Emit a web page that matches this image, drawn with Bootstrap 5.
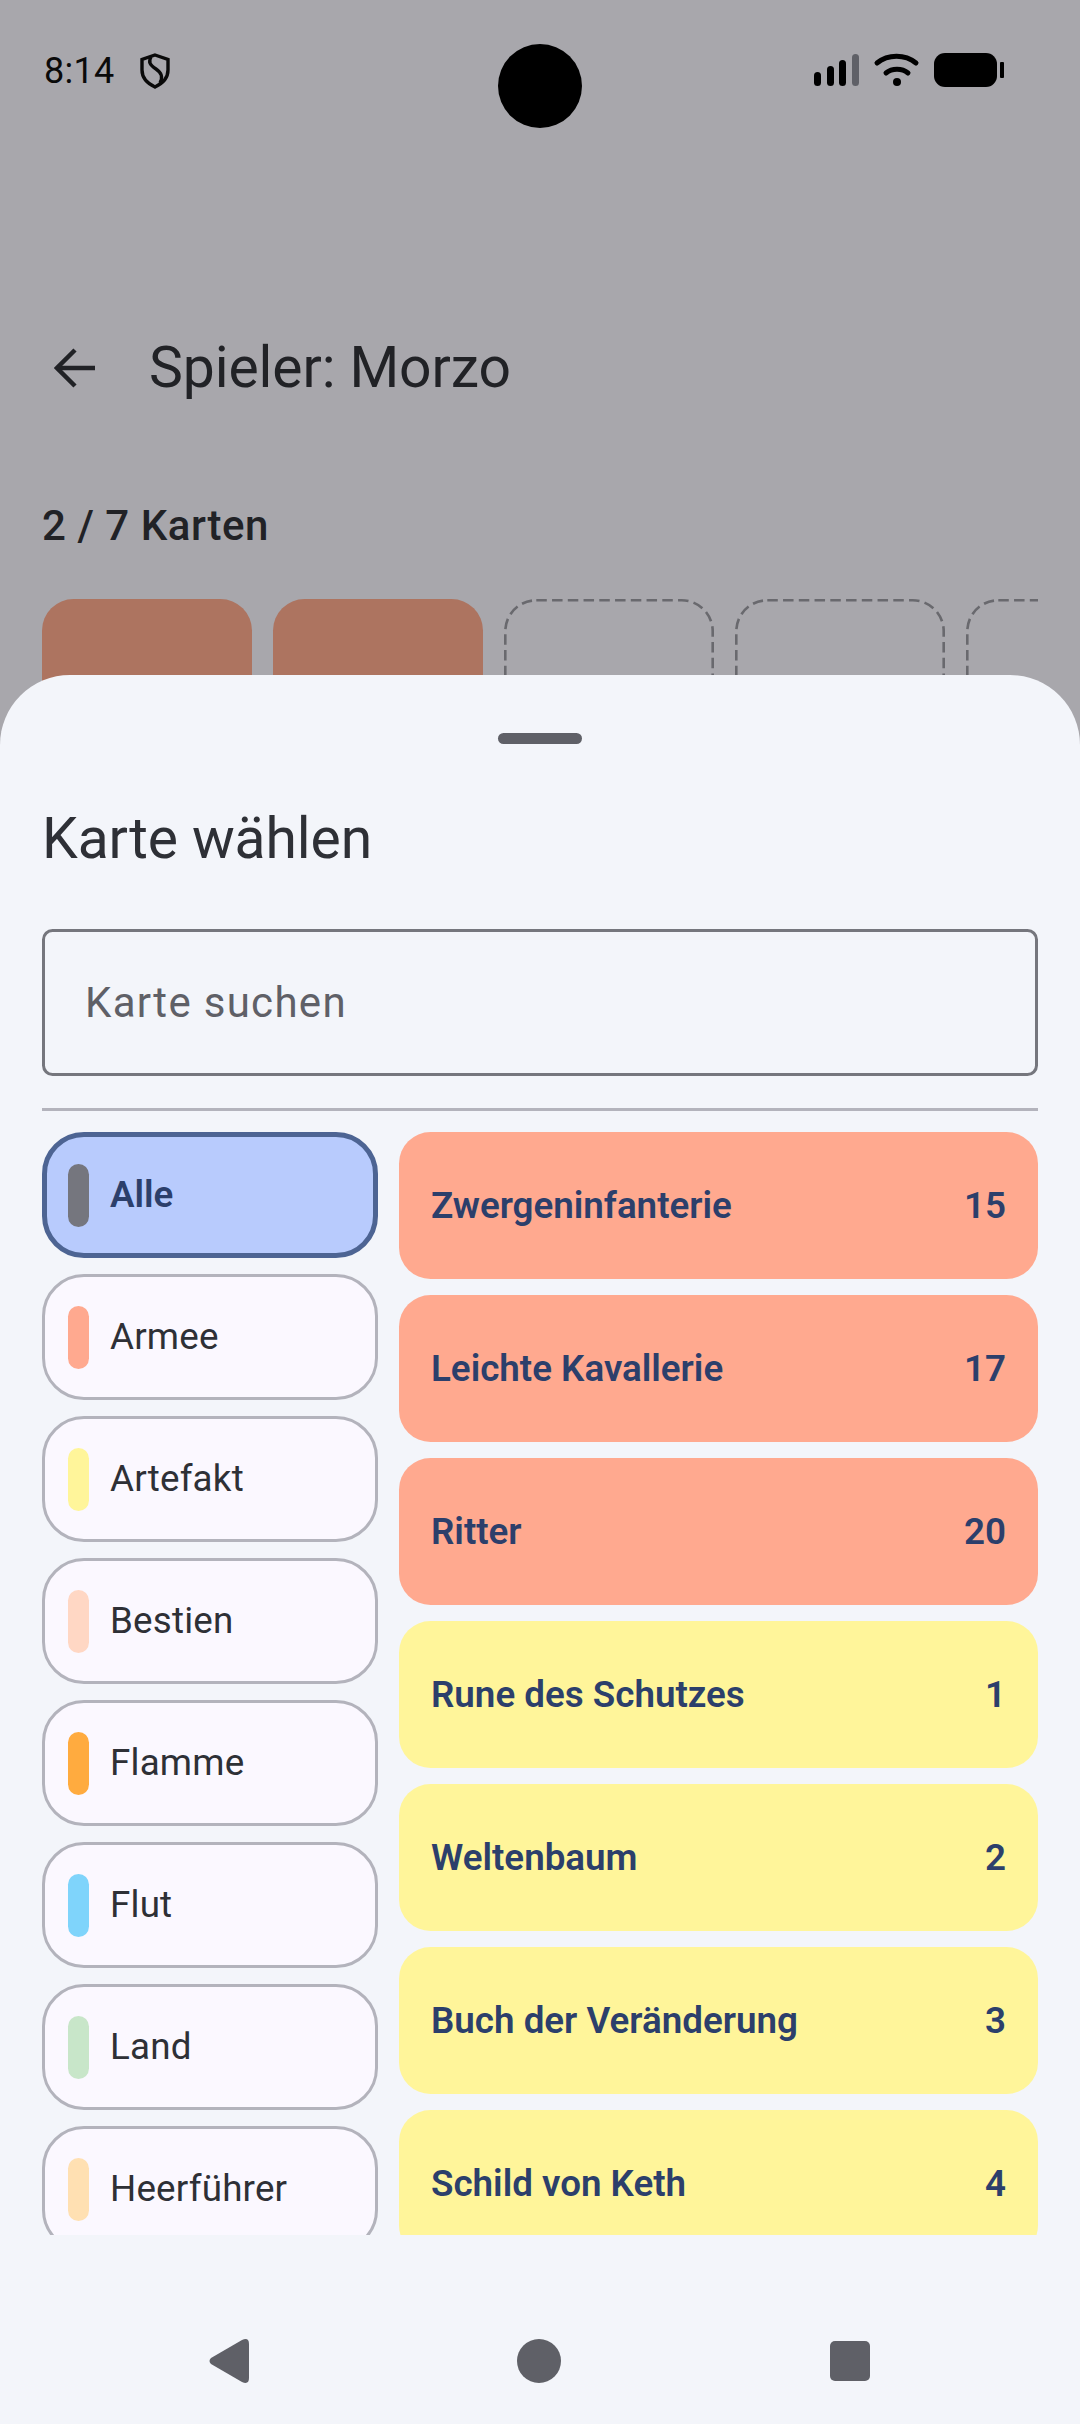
<!DOCTYPE html>
<html lang="de">
<head>
<meta charset="utf-8">
<title>Karte wählen</title>
<link rel="stylesheet" href="https://cdn.jsdelivr.net/npm/bootstrap@5.3.0/dist/css/bootstrap.min.css">
<style>
html,body{margin:0;background:#a8a7ac}
body{font-family:Roboto,"Liberation Sans",sans-serif}
.screen{width:1080px;height:2424px;position:relative;overflow:hidden;background:#a8a7ac;color:#212226}
.status-row{height:142px;padding:0 44px}
.clock{font-size:36px;line-height:42px;color:#0a0a0a;margin-right:25px;letter-spacing:.3px}
.camera{position:absolute;left:498px;top:44px;width:84px;height:84px;border-radius:50%;background:#000}
.app-row{height:147px;margin-top:152px;padding-left:54px}
.app-row svg{margin-right:54px}
.app-title{font-size:57px;line-height:70px;color:#212226;letter-spacing:-.1px}
.count-text{font-size:42px;line-height:50px;font-weight:500;letter-spacing:.55px;margin:60px 42px 0;color:#212226}
.thumb-strip{margin:48px 42px 0;gap:21px;overflow:hidden}
.thumb{flex:0 0 210px;height:294px;border-radius:31.5px;background:#ad7460}
.thumb-free{background:none;border-radius:0}
.thumb-free svg{display:block}
.sheet{position:absolute;left:0;right:0;top:675px;bottom:0;background:#f3f5fa;border-radius:70px 70px 0 0}
.grip{width:84px;height:11px;border-radius:6px;background:#5f6067;margin:58px auto 0}
.sheet-title{font-size:57px;line-height:70px;color:#2e3036;font-weight:400;margin:60px 42px 0;letter-spacing:-.1px}
.search-box{display:block;width:996px;height:147px;margin:55px 42px 0;background:transparent;border:3px solid #75767d;border-radius:10.5px;padding:0 40px;font-size:42px;letter-spacing:1.3px;color:#2e3036;font-family:inherit}
.search-box::placeholder{color:#5f6067;opacity:1}
.search-box:focus{background:transparent;border-color:#75767d;box-shadow:none}
.sheet-rule{height:3px;background:#b3b3bc;margin:32px 42px 0;border:0;opacity:1}
.picker{height:1103px;margin:21px 42px 0;gap:21px;overflow:hidden}
.cat-col{flex:0 0 336px;gap:16px}
.card-col{flex:1 1 auto;gap:16px;min-width:0}
.cat-item{flex:0 0 126px;border:3px solid #b3b3bc;border-radius:42px;background:#fbf8ff;padding-left:23px;gap:21px;font-size:36.75px;letter-spacing:.2px;color:#2e3036}
.cat-on{border:5.25px solid #4d6493;background:#b8cbfd;padding-left:21px;font-weight:600;color:#2c3f6b;letter-spacing:0}
.cat-dot{width:21px;height:63px;border-radius:10.5px;flex:none}
.dot-alle{background:#75767e}.dot-armee{background:#ffa98f}.dot-artefakt{background:#fff59a}.dot-bestien{background:#ffd7c4}.dot-flamme{background:#ffab3f}.dot-flut{background:#7fd4fb}.dot-land{background:#c8e6c9}.dot-heer{background:#ffe0b2}
.unit-item{flex:0 0 147px;border-radius:31.5px;padding:0 32px;font-size:36.75px;font-weight:600;color:#2c3f6b}
.unit-red{background:#ffa98f}.unit-yellow{background:#fff59a}
.nav-keys{position:absolute;left:0;right:0;bottom:41px;height:44px}
.nav-keys svg{position:absolute;top:0}
</style>
</head>
<body>
<div class="screen">
  <div class="status-row d-flex align-items-center">
    <span class="clock">8:14</span>
    <svg width="30" height="36" viewBox="0 0 30 36" fill="none" stroke="#0a0a0a" stroke-width="3.400"><path d="M15 2 28 6.500V17c0 8-5.500 13.500-13 17C7.500 30.500 2 25 2 17V6.500Z"/><path d="M11 4c-3 5-1 8 5 12 6 4 7 8 4 14"/></svg>
    <svg class="ms-auto" width="191" height="36" viewBox="0 0 191 36" style="margin-right:31px">
      <rect x="0" y="19" width="7" height="14" rx="3.500"/><rect x="13" y="13" width="7" height="20" rx="3.500"/><rect x="25" y="7" width="7" height="26" rx="3.500"/><rect x="38" y="1" width="7" height="32" rx="3.500" fill="#5f6067"/>
      <path d="M63 10C74 1 91 1 102 10" fill="none" stroke="#000" stroke-width="5" stroke-linecap="round"/><path d="M72 20C78 15 88 15 94 20" fill="none" stroke="#000" stroke-width="5" stroke-linecap="round"/><circle cx="83" cy="29" r="4"/>
      <rect x="120" y="0" width="63" height="34" rx="11"/><rect x="186" y="9" width="4" height="16" rx="1"/>
    </svg>
  </div>
  <div class="camera"></div>
  <div class="app-row d-flex align-items-center">
    <svg width="41" height="40" viewBox="0 0 41 40" fill="none" stroke="#212226" stroke-width="4.500"><path d="M41 20H4"/><path d="M21 2 3 20l18 18"/></svg>
    <span class="app-title">Spieler: Morzo</span>
  </div>
  <div class="count-text">2 / 7 Karten</div>
  <div class="thumb-strip d-flex">
    <div class="thumb"></div><div class="thumb"></div>
    <div class="thumb thumb-free"><svg width="210" height="294" viewBox="0 0 210 294"><rect x="1.300" y="1.300" width="207.400" height="291.400" rx="31" fill="none" stroke="#69696e" stroke-width="2.600" stroke-dasharray="10.500 5.250"/></svg></div>
    <div class="thumb thumb-free"><svg width="210" height="294" viewBox="0 0 210 294"><rect x="1.300" y="1.300" width="207.400" height="291.400" rx="31" fill="none" stroke="#69696e" stroke-width="2.600" stroke-dasharray="10.500 5.250"/></svg></div>
    <div class="thumb thumb-free"><svg width="210" height="294" viewBox="0 0 210 294"><rect x="1.300" y="1.300" width="207.400" height="291.400" rx="31" fill="none" stroke="#69696e" stroke-width="2.600" stroke-dasharray="10.500 5.250"/></svg></div>
  </div>

  <div class="sheet">
    <div class="grip"></div>
    <h2 class="sheet-title">Karte wählen</h2>
    <input class="search-box form-control" type="text" placeholder="Karte suchen">
    <hr class="sheet-rule">
    <div class="picker d-flex">
      <div class="cat-col d-flex flex-column">
        <div class="cat-item cat-on d-flex align-items-center"><span class="cat-dot dot-alle"></span>Alle</div>
        <div class="cat-item d-flex align-items-center"><span class="cat-dot dot-armee"></span>Armee</div>
        <div class="cat-item d-flex align-items-center"><span class="cat-dot dot-artefakt"></span>Artefakt</div>
        <div class="cat-item d-flex align-items-center"><span class="cat-dot dot-bestien"></span>Bestien</div>
        <div class="cat-item d-flex align-items-center"><span class="cat-dot dot-flamme"></span>Flamme</div>
        <div class="cat-item d-flex align-items-center"><span class="cat-dot dot-flut"></span>Flut</div>
        <div class="cat-item d-flex align-items-center"><span class="cat-dot dot-land"></span>Land</div>
        <div class="cat-item d-flex align-items-center"><span class="cat-dot dot-heer"></span>Heerführer</div>
      </div>
      <div class="card-col d-flex flex-column">
        <div class="unit-item unit-red d-flex align-items-center justify-content-between"><span>Zwergeninfanterie</span><span>15</span></div>
        <div class="unit-item unit-red d-flex align-items-center justify-content-between"><span>Leichte Kavallerie</span><span>17</span></div>
        <div class="unit-item unit-red d-flex align-items-center justify-content-between"><span>Ritter</span><span>20</span></div>
        <div class="unit-item unit-yellow d-flex align-items-center justify-content-between"><span>Rune des Schutzes</span><span>1</span></div>
        <div class="unit-item unit-yellow d-flex align-items-center justify-content-between"><span>Weltenbaum</span><span>2</span></div>
        <div class="unit-item unit-yellow d-flex align-items-center justify-content-between"><span>Buch der Veränderung</span><span>3</span></div>
        <div class="unit-item unit-yellow d-flex align-items-center justify-content-between"><span>Schild von Keth</span><span>4</span></div>
      </div>
    </div>
    <div class="nav-keys">
      <svg style="left:208px" width="42" height="44" viewBox="0 0 42 44"><path d="M34 1 3 19q-3 3 0 6l31 18q7 3 7-4V5q0-7-7-4Z" fill="#5f6067"/></svg>
      <svg style="left:517px" width="44" height="44" viewBox="0 0 44 44"><circle cx="22" cy="22" r="22" fill="#5f6067"/></svg>
      <svg style="left:830px" width="40" height="44" viewBox="0 0 40 44"><rect y="2" width="40" height="40" rx="5" fill="#5f6067"/></svg>
    </div>
  </div>
</div>
<script src="https://cdn.jsdelivr.net/npm/bootstrap@5.3.0/dist/js/bootstrap.bundle.min.js"></script>
</body>
</html>
